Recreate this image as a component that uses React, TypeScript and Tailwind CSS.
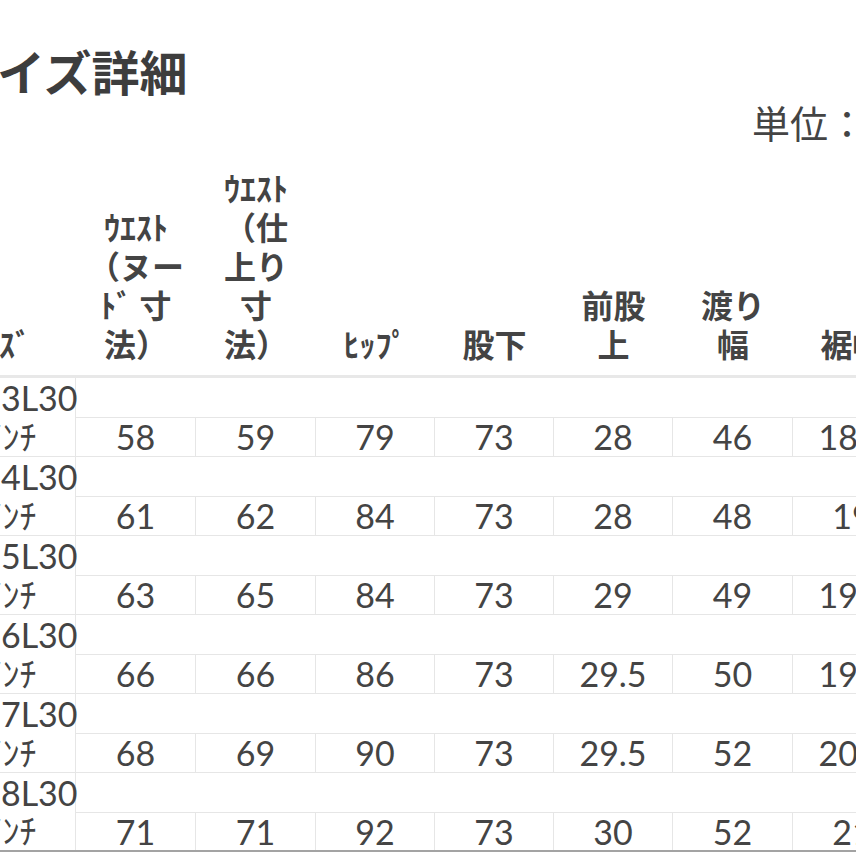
import React from 'react';

const colWidths = ['w-[120px]', 'w-[120px]', 'w-[119px]', 'w-[119px]', 'w-[119px]', 'w-[120px]', 'w-[119px]'];

const headers: string[][] = [
  ['ｳｴｽﾄ', '（ヌー', 'ﾄﾞ 寸', '法）'],
  ['ｳｴｽﾄ', '（仕', '上り', '寸', '法）'],
  ['ﾋｯﾌﾟ'],
  ['股下'],
  ['前股', '上'],
  ['渡り', '幅'],
  ['裾幅'],
];

const rows = [
  { size: 'W23L30', inch: '23ｲﾝﾁ', values: ['58', '59', '79', '73', '28', '46', '18.5'] },
  { size: 'W24L30', inch: '24ｲﾝﾁ', values: ['61', '62', '84', '73', '28', '48', '19'] },
  { size: 'W25L30', inch: '25ｲﾝﾁ', values: ['63', '65', '84', '73', '29', '49', '19.5'] },
  { size: 'W26L30', inch: '26ｲﾝﾁ', values: ['66', '66', '86', '73', '29.5', '50', '19.5'] },
  { size: 'W27L30', inch: '27ｲﾝﾁ', values: ['68', '69', '90', '73', '29.5', '52', '20.5'] },
  { size: 'W28L30', inch: '28ｲﾝﾁ', values: ['71', '71', '92', '73', '30', '52', '21'] },
];

const App = () => {
  return (
    <div className="w-[856px] h-[856px] overflow-hidden bg-white text-[#444]">
      <div className="ml-[-78px] w-[990px] pt-[46px]">
        <h2 className="ml-[27px] text-[48px] leading-none font-bold text-[#3d3d3d] font-['Noto_Sans_CJK_JP',sans-serif]">
          サイズ詳細
        </h2>
        <div className="mt-[9px] pl-[830px] whitespace-nowrap text-[38px] leading-none font-['Noto_Sans_CJK_JP',sans-serif]">
          単位：cm
        </div>

        {/* header */}
        <div className="flex h-[237px] border-b-[3px] border-[#e8e8e8] text-[32px] leading-[39px] font-bold font-['Noto_Sans_CJK_JP',sans-serif]">
          <div className="w-[154px] flex flex-col justify-end items-center pb-[12px]">
            <span>ｻｲｽﾞ</span>
          </div>
          {headers.map((lines, i) => (
            <div key={i} className={`${colWidths[i]} flex flex-col justify-end items-center pb-[12px] whitespace-pre`}>
              {lines.map((l, j) => (
                <span key={j}>{l}</span>
              ))}
            </div>
          ))}
        </div>

        {/* body */}
        {rows.map((row, r) => (
          <div
            key={row.size}
            className={
              r === rows.length - 1
                ? 'flex h-[79px] border-b-2 border-[#a3a3a3]'
                : 'flex h-[79px] border-b border-[#e6e6e6]'
            }
          >
            <div className="w-[154px] border-r border-[#e6e6e6] flex flex-col pl-[24px] text-[34px] font-['Lato','Noto_Sans_CJK_JP',sans-serif]">
              <div className="h-[39px] flex items-center leading-none">{row.size}</div>
              <div className="flex-1 flex items-center leading-none">{row.inch}</div>
            </div>
            <div className="flex-1 flex flex-col">
              <div className="h-[39px]" />
              <div className="flex-1 flex border-t border-[#e6e6e6] text-[34px] font-['Lato',sans-serif]">
                {row.values.map((v, i) => (
                  <div key={i} className={`${colWidths[i]} border-r border-[#e6e6e6] flex items-center justify-center leading-none`}>
                    {v}
                  </div>
                ))}
              </div>
            </div>
          </div>
        ))}
      </div>
    </div>
  );
};

export default App;
